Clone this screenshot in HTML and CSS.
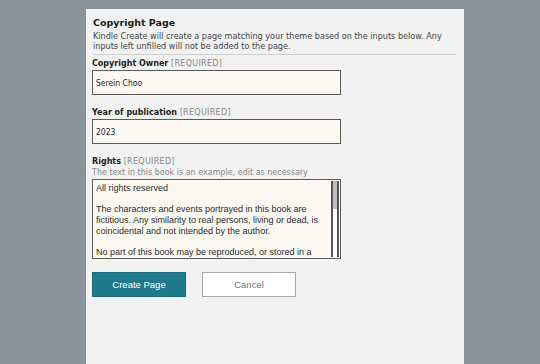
FILE: index.html
```html
<!DOCTYPE html>
<html lang="en">
<head>
  <meta charset="UTF-8">
  <title>Copyright Page</title>
  <link rel="stylesheet" href="styles.css">
</head>
<body>
  <div class="dialog">
    <h1 class="title">Copyright Page</h1>
    <p class="intro">Kindle Create will create a page matching your theme based on the inputs below. Any inputs left unfilled will not be added to the page.</p>

    <div class="field">
      <label class="label">Copyright Owner <span class="req">[REQUIRED]</span></label>
      <input class="input" type="text" value="Serein Choo">
    </div>

    <div class="field">
      <label class="label">Year of publication <span class="req">[REQUIRED]</span></label>
      <input class="input" type="text" value="2023">
    </div>

    <div class="field">
      <label class="label">Rights <span class="req">[REQUIRED]</span></label>
      <div class="hint">The text in this book is an example, edit as necessary</div>
      <div class="area-box">
        <textarea class="area" wrap="off">All rights reserved

The characters and events portrayed in this book are
fictitious. Any similarity to real persons, living or dead, is
coincidental and not intended by the author.

No part of this book may be reproduced, or stored in a
retrieval system, or transmitted in any form or by any means,
electronic, mechanical, photocopying, recording, or otherwise,
without express written permission of the publisher.</textarea>
        <div class="scrollbar"><div class="thumb"></div></div>
      </div>
    </div>

    <div class="actions">
      <button class="btn primary">Create Page</button>
      <button class="btn secondary">Cancel</button>
    </div>
  </div>
</body>
</html>
```

FILE: styles.css
```css
html, body {
  height: 100%;
  margin: 0;
}

body {
  background-color: #89919a;
  font-family: 'DejaVu Sans', sans-serif;
  overflow: hidden;
}

.dialog {
  box-sizing: border-box;
  width: 378px;
  height: 100%;
  margin: 9px 0 0 86px;
  background-color: #f2f2f2;
  padding: 8px 8px 0 6px;
}

.title {
  margin: 0 0 0 1px;
  font-size: 9.5px;
  font-weight: bold;
  color: #1a1a1a;
}

.intro {
  margin: 3px 0 0 1px;
  font-size: 8.1px;
  line-height: 10px;
  color: #444;
  padding-bottom: 3px;
  border-bottom: 1px solid #cfcfcf;
}

.field {
  margin-top: 4px;
}

.field + .field {
  margin-top: 13px;
}

.label {
  display: block;
  font-size: 8px;
  font-weight: bold;
  color: #222;
  margin-bottom: 2px;
}

.req {
  font-weight: normal;
  color: #888;
  letter-spacing: 0.3px;
}

.input {
  box-sizing: border-box;
  display: block;
  width: 249px;
  height: 25px;
  background-color: #fcf9f3;
  border: 1px solid #5a5a5a;
  padding: 0 3px;
  font-family: 'DejaVu Sans Condensed', sans-serif;
  font-size: 8.5px;
  color: #222;
  outline: none;
}

.hint {
  font-size: 8px;
  color: #888;
  margin: 1px 0 2px;
}

.area-box {
  box-sizing: border-box;
  display: flex;
  width: 249px;
  height: 80px;
  background-color: #fcf9f3;
  border: 1px solid #5a5a5a;
}

.area {
  flex: 1;
  min-width: 0;
  border: none;
  background: transparent;
  padding: 3px 3px 0;
  font-family: 'Liberation Sans', sans-serif;
  font-size: 9px;
  line-height: 10.7px;
  color: #2a2a2a;
  resize: none;
  overflow: hidden;
  outline: none;
}

.scrollbar {
  box-sizing: border-box;
  width: 8px;
  margin: 1px 1px 1px 0;
  background-color: #fff;
  border: 1px solid #555;
  border-width: 0 2px;
}

.thumb {
  height: 28px;
  background-color: #bdbdbd;
}

.actions {
  display: flex;
  gap: 16px;
  margin-top: 13px;
}

.btn {
  box-sizing: border-box;
  width: 94px;
  height: 25px;
  font-family: 'Liberation Sans', sans-serif;
  font-size: 9.5px;
  cursor: pointer;
}

.primary {
  background-color: #1f7a8b;
  border: 1px solid #1a6a78;
  color: #fff;
}

.secondary {
  background-color: #fff;
  border: 1px solid #a8a8a8;
  color: #777;
}
```
